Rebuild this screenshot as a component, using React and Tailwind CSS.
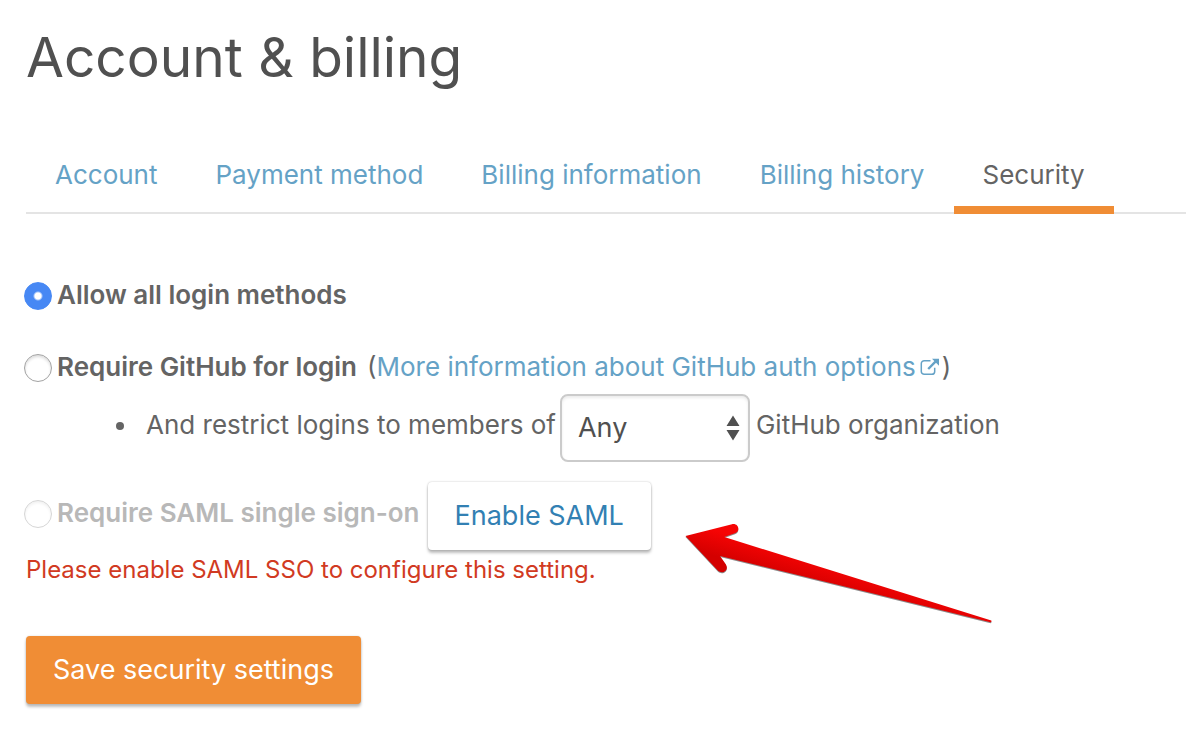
import { useState } from "react";

const TABS = [
  "Account",
  "Payment method",
  "Billing information",
  "Billing history",
  "Security",
];

const ARROW_PATH =
  "M1.5 15 48 3.200C55 2 56.500 10.500 51 12.300L40.300 16 307.300 99.500Q308 100.800 306.500 101.300L36 35 41.800 43.200C45.500 49 38.500 54 33.800 49.600Z";

function Radio({ id, value, selected, onSelect, disabled = false }) {
  return (
    <input
      id={id}
      type="radio"
      name="login-method"
      checked={selected === value}
      disabled={disabled}
      onChange={() => onSelect(value)}
      className="mr-[5px] size-7 shrink-0 appearance-none rounded-full border border-[#a3a3a3] bg-white shadow-[inset_0_2px_3px_rgba(0,0,0,0.14)] checked:border-[#4788f4] checked:bg-[radial-gradient(circle,#fff_3px,#4788f4_5px)] checked:shadow-none disabled:border-[#d6d6d6] disabled:shadow-[inset_0_2px_3px_rgba(0,0,0,0.06)]"
    />
  );
}

function ExternalLinkIcon() {
  return (
    <svg viewBox="0 0 20 18" className="ml-1 inline-block h-[18px] w-5 align-baseline" fill="none" aria-hidden="true">
      <path
        d="M10.5 2.7H4.2A2.9 2.9 0 0 0 1.3 5.6v7.8a2.9 2.9 0 0 0 2.9 2.9h7.6a2.9 2.9 0 0 0 2.9-2.9V9.8"
        stroke="currentColor"
        strokeWidth="1.5"
      />
      <path d="M8.2 11 16 3.2" stroke="currentColor" strokeWidth="2.4" />
      <path d="M12 .8h7v7z" fill="currentColor" />
    </svg>
  );
}

function PointerArrow() {
  return (
    <svg
      viewBox="0 0 310 104"
      className="pointer-events-none absolute top-[521px] left-[684px] h-[104px] w-[310px]"
      aria-hidden="true"
    >
      <defs>
        <linearGradient id="arrow-fill" gradientUnits="userSpaceOnUse" x1="130" y1="38" x2="123" y2="62">
          <stop offset="0" stopColor="#f60404" />
          <stop offset="1" stopColor="#d40000" />
        </linearGradient>
      </defs>
      <path d={ARROW_PATH} transform="translate(0 1)" fill="#8c8c8c" />
      <path d={ARROW_PATH} fill="url(#arrow-fill)" />
    </svg>
  );
}

export default function App() {
  const [method, setMethod] = useState("all");

  return (
    <div className="relative min-h-screen bg-white pt-[21px] pb-10 pl-[26px] font-['Inter',sans-serif] text-[26px] leading-10 text-[#646464]">
      <h1 className="text-[55px] leading-[72px] text-[#505050]">Account &amp; billing</h1>

      <nav className="mt-[62px] flex shadow-[inset_0_-2px_0_#e4e4e4]">
        {TABS.map((tab) => (
          <a
            key={tab}
            href="#"
            aria-current={tab === "Security" ? "page" : undefined}
            className="border-b-8 border-transparent px-[29px] pb-[11px] whitespace-nowrap text-[#65a2c6] aria-[current=page]:border-[#f08d35] aria-[current=page]:text-[#646464]"
          >
            {tab}
          </a>
        ))}
      </nav>

      <form className="mt-[62px]" onSubmit={(event) => event.preventDefault()}>
        <div className="-ml-0.5 flex h-10 items-center">
          <Radio id="login-all" value="all" selected={method} onSelect={setMethod} />
          <label htmlFor="login-all" className="pb-0.5 font-semibold">
            Allow all login methods
          </label>
        </div>

        <div className="mt-8 -ml-0.5 flex h-10 items-center whitespace-nowrap">
          <Radio id="login-github" value="github" selected={method} onSelect={setMethod} />
          <label htmlFor="login-github" className="pb-0.5 font-semibold">
            Require GitHub for login
          </label>
          <span className="ml-2.5 pb-0.5">
            (
            <a href="#" className="mr-0.5 text-[#65a2c6]">
              More information about GitHub auth options
              <ExternalLinkIcon />
            </a>
            )
          </span>
        </div>

        <ul className="mt-1.5 pl-[90px]">
          <li className="flex items-center whitespace-nowrap">
            <span className="mr-[22px] mb-1 size-2 rounded-full bg-[#646464]" aria-hidden="true" />
            <label htmlFor="github-org" className="pb-1.5">
              And restrict logins to members of
            </label>
            <span className="relative mr-1.5 ml-1 flex text-[27px] text-[#505050]">
              <select
                id="github-org"
                className="h-[68px] w-[190px] appearance-none rounded-lg border-2 border-[#cbcbcb] bg-white px-4 shadow-[inset_0_2px_3px_rgba(0,0,0,0.08)]"
              >
                <option>Any</option>
              </select>
              <svg
                viewBox="0 0 14 26"
                className="pointer-events-none absolute top-[21px] right-2.5 h-[26px] w-3.5"
                fill="currentColor"
                aria-hidden="true"
              >
                <path d="M7 .5 13.500 11H.5zM.5 15h13L7 25.500z" />
              </svg>
            </span>
            <span className="pb-1.5">GitHub organization</span>
          </li>
        </ul>

        <div className="mt-5 -ml-0.5 flex items-center whitespace-nowrap">
          <div className="flex items-center pb-1 text-[#b8b8b8]">
            <Radio id="login-saml" value="saml" selected={method} onSelect={setMethod} disabled />
            <label htmlFor="login-saml" className="pb-0.5 font-semibold">
              Require SAML single sign-on
            </label>
          </div>
          <button
            type="button"
            className="ml-2 h-[68px] rounded-[4px] bg-white px-[27px] text-[27px] text-[#3280b3] shadow-[0_0_2px_rgba(0,0,0,0.25),0_3px_3px_rgba(0,0,0,0.25)]"
          >
            Enable SAML
          </button>
        </div>
        <p className="text-[24px] text-[#d13a22]">Please enable SAML SSO to configure this setting.</p>

        <button
          type="submit"
          className="mt-[46px] h-[68px] rounded-[4px] bg-[#f08d35] px-[27px] text-[27px] text-white shadow-[0_0_2px_rgba(0,0,0,0.15),0_3px_3px_rgba(0,0,0,0.25)]"
        >
          Save security settings
        </button>
      </form>

      <PointerArrow />
    </div>
  );
}
